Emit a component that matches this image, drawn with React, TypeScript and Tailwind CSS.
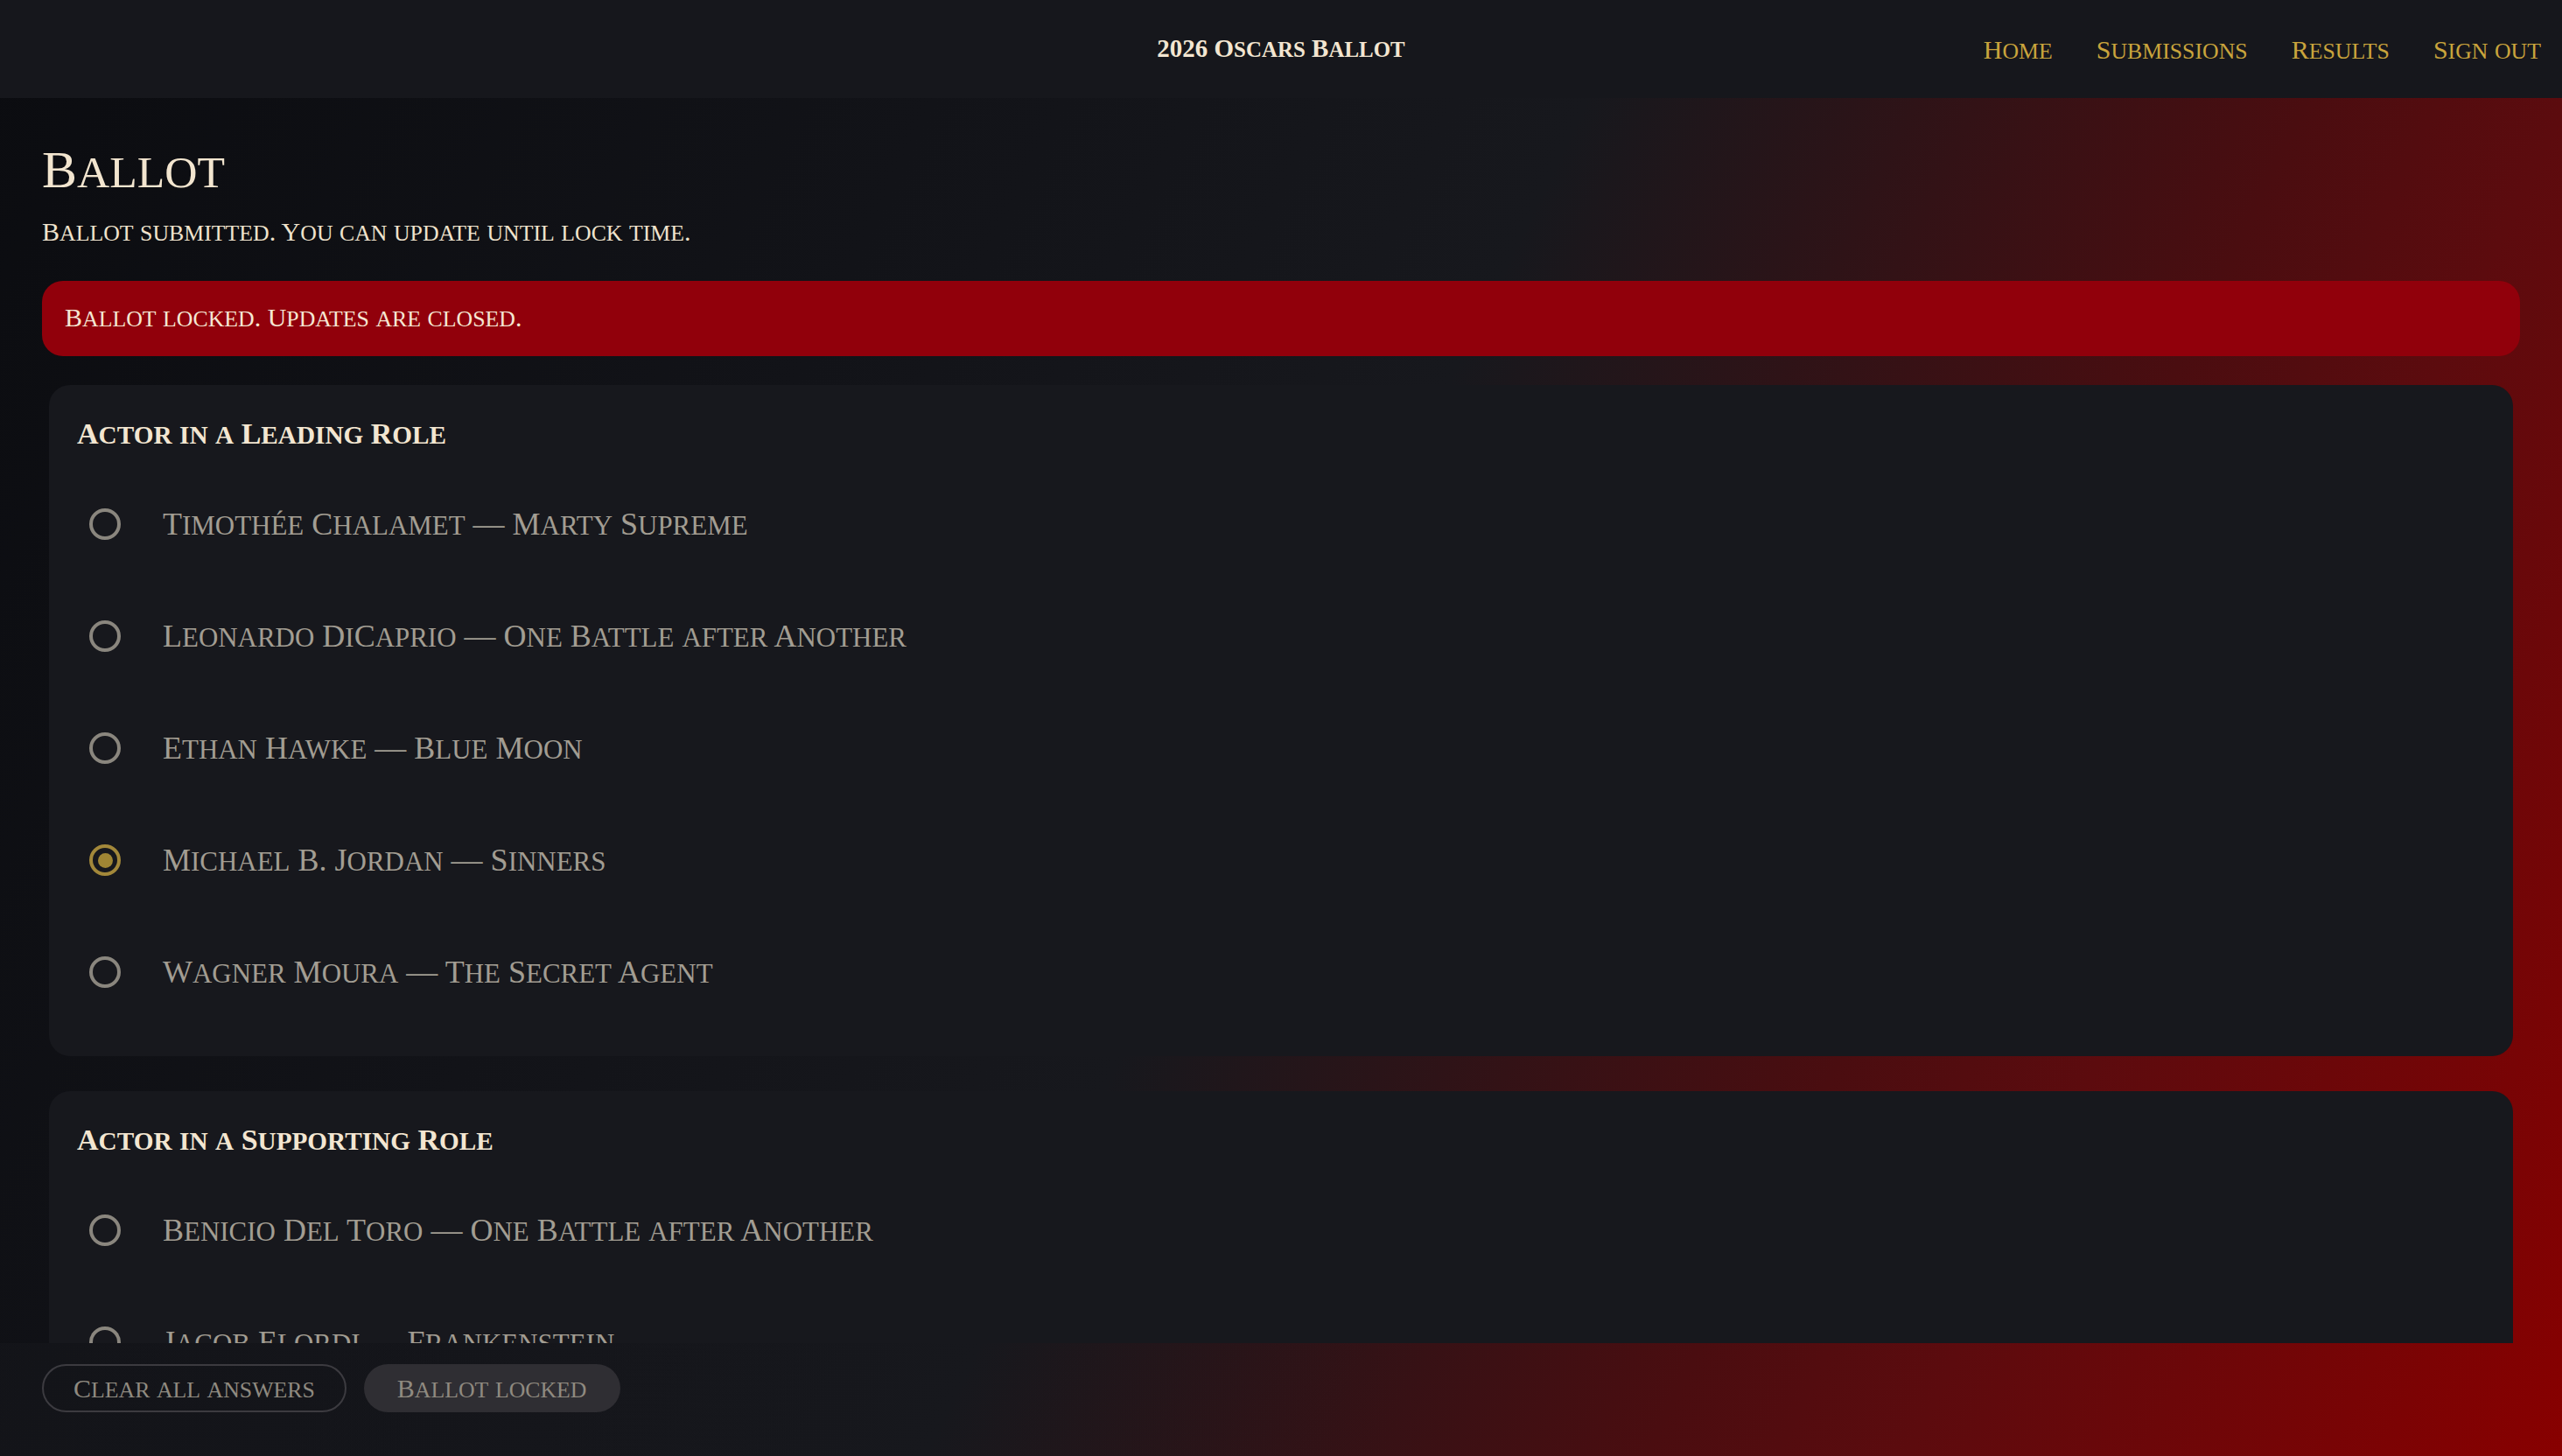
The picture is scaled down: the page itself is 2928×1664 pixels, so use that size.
import React from 'react'

// nominees per category, picked = index of the saved answer
interface Category {
    title: string,
    nominees: string[],
    picked: number | null
}

const categories: Category[] = [
    {
        title: 'Actor in a Leading Role',
        nominees: [
            'Timothée Chalamet — Marty Supreme',
            'Leonardo DiCaprio — One Battle after Another',
            'Ethan Hawke — Blue Moon',
            'Michael B. Jordan — Sinners',
            'Wagner Moura — The Secret Agent',
        ],
        picked: 3,
    },
    {
        title: 'Actor in a Supporting Role',
        nominees: [
            'Benicio Del Toro — One Battle after Another',
            'Jacob Elordi — Frankenstein',
            'Delroy Lindo — Sinners',
            'Sean Penn — One Battle after Another',
            'Stellan Skarsgård — Sentimental Value',
        ],
        picked: null,
    },
]

const navLinks = ['Home', 'Submissions', 'Results', 'Sign out']

// capitals stay full size, lowercase letters are set as slightly smaller capitals
const Caps = ({ text }: { text: string }) => {
    const parts = text.split(/([a-zà-ÿ]+)/)
    return (
        <span>
            {parts.map((part, i) =>
                i % 2 === 1
                    ? <span key={i} className="uppercase text-[0.86em]">{part}</span>
                    : <React.Fragment key={i}>{part}</React.Fragment>
            )}
        </span>
    )
}

const Radio = ({ checked }: { checked: boolean }) => {
    return (
        <span className={`flex h-[36px] w-[36px] shrink-0 items-center justify-center rounded-full border-[4px] ${checked ? 'border-[#a3883a]' : 'border-[#8a867e]'}`}>
            {checked && <span className="h-[17px] w-[17px] rounded-full bg-[#a08634]" />}
        </span>
    )
}

const CategoryCard = ({ category }: { category: Category }) => {
    return (
        <section className="mx-[8px] rounded-[24px] bg-[#17181d] px-[32px] pt-[32px] pb-[32px]">
            <h2 className="text-[34px] font-bold leading-[48px] text-[#f3e6d1]">
                <Caps text={category.title} />
            </h2>
            <div className="mt-[14px] flex flex-col">
                {category.nominees.map((nominee, i) => (
                    <label key={nominee} className="flex h-[128px] items-center gap-[48px] px-[14px]">
                        <Radio checked={category.picked === i} />
                        <span className="text-[36px] text-[#a29d92]">
                            <Caps text={nominee} />
                        </span>
                    </label>
                ))}
            </div>
        </section>
    )
}

export default function App() {
    return (
        <div className="flex h-[1664px] w-[2928px] flex-col overflow-hidden bg-[linear-gradient(116deg,#0b0c10_0%,#121318_30%,#17181d_50%,#4a0d10_72%,#5c0b0e_80%,#880000_100%)] font-['Liberation_Serif',serif]">

            {/* top bar */}
            <header className="grid h-[112px] shrink-0 grid-cols-[1fr_auto_1fr] items-center bg-[#16171c] px-[24px]">
                <div />
                <div className="text-[29px] font-bold text-[#f3e6d1]">
                    <Caps text="2026 Oscars Ballot" />
                </div>
                <nav className="flex justify-end gap-[50px] text-[30px] text-[#c9a43c]">
                    {navLinks.map((link) => (
                        <a key={link} href="#">
                            <Caps text={link} />
                        </a>
                    ))}
                </nav>
            </header>

            {/* ballot */}
            <main className="min-h-0 flex-1 overflow-hidden px-[48px] pt-[52px]">
                <h1 className="text-[60px] leading-none text-[#f2e5cf]">
                    <Caps text="Ballot" />
                </h1>
                <p className="mt-[18px] text-[30px] leading-[45px] text-[#efe3cd]">
                    <Caps text="Ballot submitted. You can update until lock time." />
                </p>
                <div className="mt-[32px] rounded-[24px] bg-[#91000b] px-[26px] py-[20px] text-[30px] leading-[44px] text-[#f5e7d3]">
                    <Caps text="Ballot locked. Updates are closed." />
                </div>

                <div className="mt-[33px] flex flex-col gap-[40px]">
                    {categories.map((category) => (
                        <CategoryCard key={category.title} category={category} />
                    ))}
                </div>
            </main>

            {/* actions */}
            <footer className="flex h-[129px] shrink-0 items-start gap-[20px] bg-[linear-gradient(90deg,rgba(23,24,29,0.45),rgba(23,24,29,0)_55%)] px-[48px] pt-[24px] text-[30px]">
                <button className="flex h-[55px] items-center rounded-full border-2 border-[#3c3b40] px-[34px] text-[#8f8a80]">
                    <Caps text="Clear all answers" />
                </button>
                <button disabled className="flex h-[55px] items-center rounded-full border-2 border-transparent bg-[#2f2e33] px-[36px] text-[#8f8a80]">
                    <Caps text="Ballot locked" />
                </button>
            </footer>
        </div>
    )
}
